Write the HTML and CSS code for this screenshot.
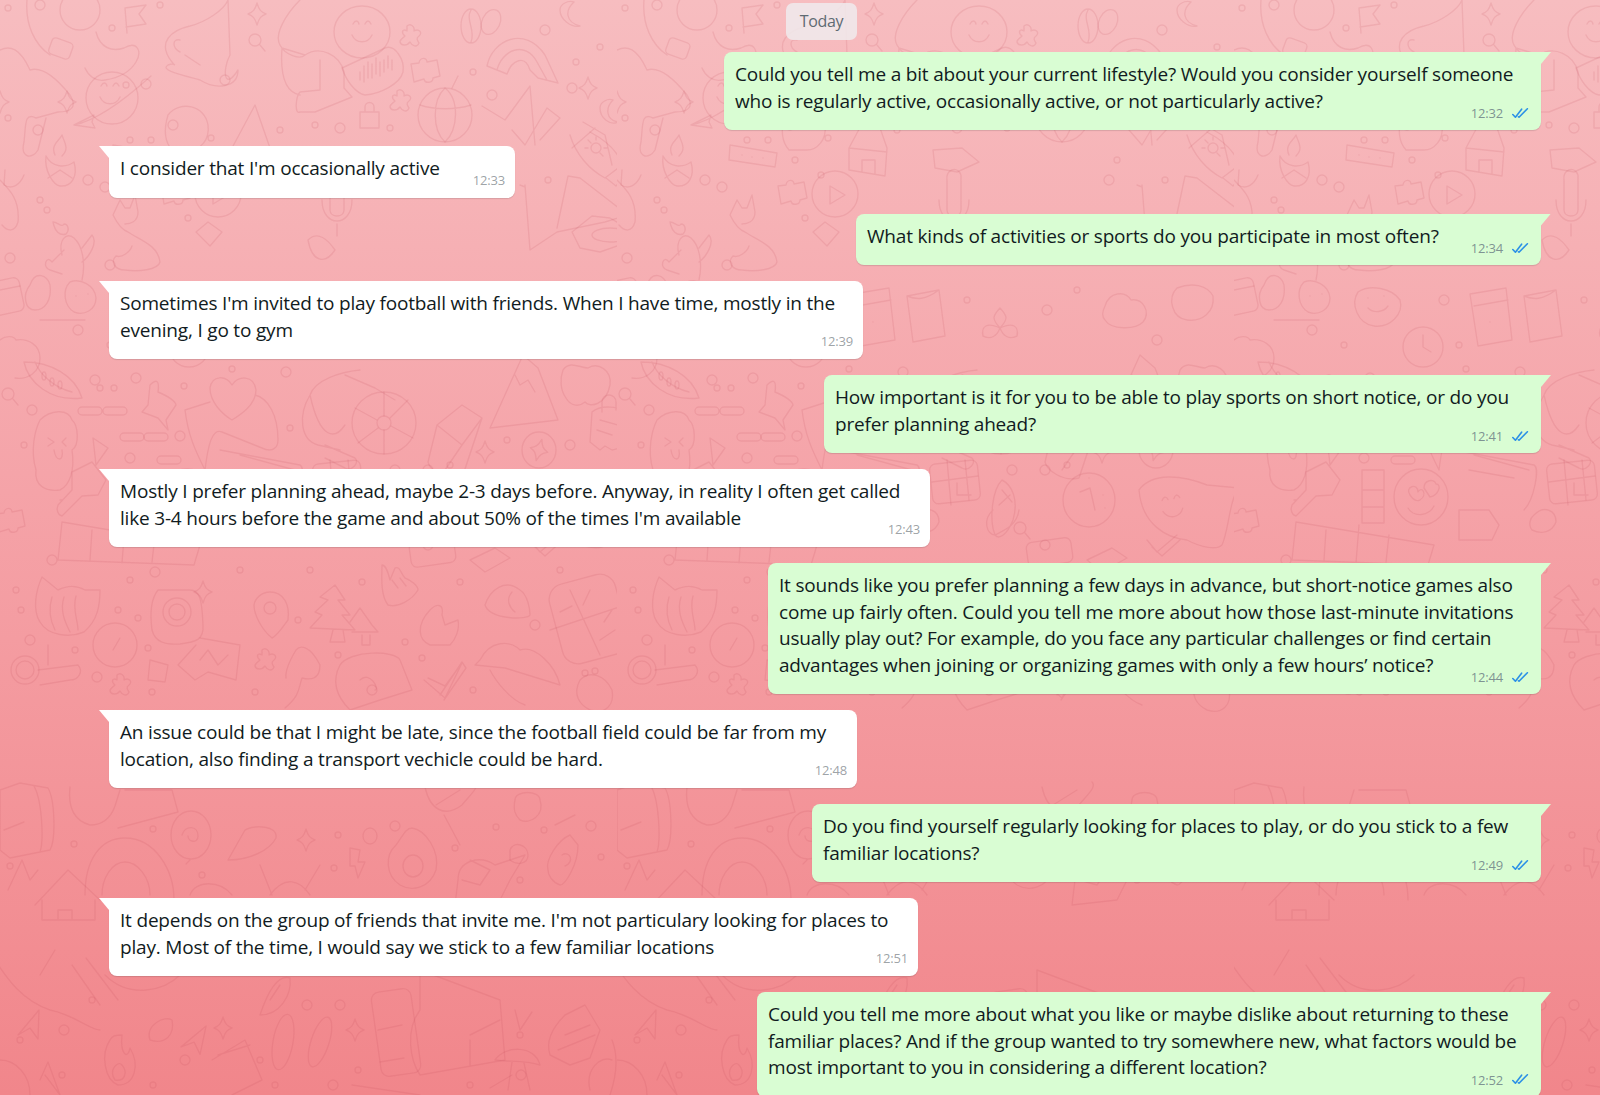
FILE: index.html
```html
<!DOCTYPE html>
<html lang="en">
<head>
<meta charset="utf-8">
<title>Chat</title>
<link rel="stylesheet" href="styles.css">
</head>
<body>
<svg class="doodles" width="1600" height="1095" aria-hidden="true">
  <defs>
    <circle id="o" r="5"/>
    <circle id="p" r="3"/>
    <path id="star" d="M0 -11C2 -4 4 -2 9 0C4 2 2 4 0 11C-2 4 -4 2 -9 0C-4 -2 -2 -4 0 -11Z"/>
    <path id="cross" d="M-3 -10C0 -13 5 -10 4 -5C9 -8 13 -3 9 0C6 2 7 4 9 7C7 12 2 10 0 6C-3 10 -9 10 -10 6C-10 3 -7 2 -5 0C-9 -3 -8 -8 -3 -5Z"/>
    <path id="pill" d="M-8 -4H8A4 4 0 0 1 8 4H-8A4 4 0 0 1 -8 -4Z"/>
    <path id="nav" d="M-11 12L10 -13L9 16L1 5Z"/>
    <path id="smile" d="M-10 5C-6 14 6 14 10 5M-9 -6C-7 -10 -4 -10 -3 -6M3 -6C5 -10 7 -10 9 -6"/>
    <path id="puzzle" d="M-14 -6L-6 -7C-5 -13 2 -13 2 -8L12 -10L15 6L8 8C8 13 0 14 -1 9L-11 12Z"/>
    <g id="mag"><circle cx="-2" cy="-2" r="6"/><path d="M3 3L8 9"/></g>
    <pattern id="tile" width="617" height="1095" patternUnits="userSpaceOnUse">
      <g class="ink">
        <!-- band 0-145 -->
        <circle cx="80" cy="10" r="20"/>
        <path d="M27 0C25 25 35 45 50 55M96 32C100 48 112 52 124 48C138 40 142 52 136 62C130 72 118 78 105 80C95 82 88 75 85 68M0 50C10 45 20 48 30 70M30 70C45 65 62 85 70 95C78 108 70 112 58 112L36 118C24 112 26 125 24 142C20 158 32 160 38 150L46 118"/>
        <rect x="50" y="40" width="22" height="17" rx="4" transform="rotate(20 61 48)"/>
        <path d="M127 33L125 8L146 5L139 14L146 24L126 27"/>
        <circle cx="112" cy="98" r="26"/><path d="M74 125C100 120 130 95 151 76M74 125L94 115L92 122L95 128Z"/>
        <use href="#smile" x="110" y="92"/>
        <use href="#star" x="67" y="102"/>
        <path d="M172 62C156 42 172 30 190 26C206 22 224 10 228 0L230 55C222 70 224 92 238 70C238 88 216 90 200 80C178 74 160 70 168 65C176 62 176 68 172 62ZM180 40C172 38 172 48 180 52M185 55L200 65"/>
        <use href="#star" x="257" y="14"/>
        <use href="#mag" x="257" y="42"/>
        <path d="M300 0C285 15 274 35 280 45C285 55 300 60 305 55L282 48C280 75 285 92 300 95M305 55C320 45 340 55 344 72L344 88L352 97L315 112L300 112C294 115 296 96 300 92L320 90V60"/>
        <ellipse cx="362" cy="32" rx="28" ry="26"/>
        <use href="#smile" x="362" y="30"/>
        <path d="M342 68L385 48C395 44 405 60 403 72C400 84 380 94 365 95C355 93 346 80 342 68ZM360 80V72M364 82V66M368 78V62M372 78V64M376 74V58M380 76V62M384 72V60M388 68V56M392 70V60"/>
        <use href="#cross" x="410" y="36"/>
        <use href="#puzzle" x="425" y="70"/>
        <use href="#cross" x="400" y="101"/>
        <path d="M360 112h19v16h-19zM365 112v-5a4 4 0 0 1 9 0v5"/>
        <circle cx="445" cy="115" r="27"/><path d="M445 88C432 100 432 130 445 142C458 130 460 100 445 88M420 105C435 110 455 110 471 105M452 88L458 76"/>
        <ellipse cx="471" cy="26" rx="10" ry="17"/><ellipse cx="491" cy="22" rx="9" ry="13" transform="rotate(25 491 22)"/><path d="M471 10C465 20 476 30 471 42"/>
        <path d="M487 66C492 40 525 25 545 55L558 83M497 70C502 50 525 40 537 62L547 80M507 74C512 60 525 54 530 70L538 78M487 66L507 74M538 78L558 83"/>
        <path d="M232 148L255 105L270 148L268 176L232 170ZM232 148L270 152M245 172V160H258V174"/>
        <path d="M574 2C565 10 565 22 580 26C572 28 560 20 560 10C560 4 568 0 574 2ZM613 100C605 108 606 120 618 122C610 126 600 118 600 108C600 102 608 98 613 100Z"/>
        <use href="#star" x="588" y="88"/>
        <use href="#star" x="0" y="102"/>
        <path d="M168 115C180 100 205 105 208 125C210 140 200 150 190 150H172C163 140 165 125 168 115Z"/>
        <path d="M482 106L505 120L530 86L535 145M512 130L525 145L547 108L560 118L540 140"/>
        <path d="M583 122L605 135L612 165M572 148L595 128"/>
        <!-- band 135-280 -->
        <path d="M570 135C576 155 590 170 605 178L622 165C618 150 605 140 590 132M606 178L616 186L630 170L620 162"/>
        <circle cx="596" cy="148" r="5"/><path d="M596 137v3M585 148h3M604 148h3M588 140l3 3M603 156l-3 -3"/>
        <path d="M46 156C44 172 54 185 60 186C72 187 78 176 74 162C66 168 52 168 46 156ZM55 155C50 145 60 140 62 135C64 142 70 148 62 156M48 178L60 170L72 178"/>
        <path d="M5 170L4 185C12 190 20 185 24 175"/>
        <path d="M572 232L592 216L610 218L627 228L620 245L600 252L580 248Z"/>
        <path d="M525 185L530 250L557 232L605 222L628 215L580 178L568 176L557 228M520 185L525 187"/>
        <ellipse cx="610" cy="235" rx="18" ry="7"/>
        <path d="M113 148L160 156L158 170L112 163ZM125 158v.1M135 160v.1M146 161v.1" transform="translate(0 -3)"/>
        <path d="M120 200L113 215C118 225 122 230 128 232C140 240 158 245 160 262C158 270 138 272 125 270C115 270 110 262 116 256C122 258 130 252 132 246M120 200L125 208L130 208L135 195L138 212C138 222 130 224 125 224"/>
        <path d="M62 255C58 240 66 232 74 238C82 245 86 262 82 280M64 250L52 262C46 254 42 268 50 270L62 274M82 248L92 235C98 242 90 256 82 262M53 222C58 222 62 228 64 224C68 224 70 230 66 234C60 236 55 232 53 222Z"/>
        <use href="#puzzle" x="175" y="192"/>
        <circle cx="218" cy="194" r="23"/><path d="M213 186L213 204L228 195Z"/>
        <path d="M196 232L208 222L222 232L210 246Z"/>
        <path d="M0 180C10 190 20 200 18 222C15 232 8 232 2 225"/>
        <!-- band 280-370 -->
        <path d="M30 285C35 270 48 275 50 285C52 300 45 310 35 310C25 310 22 295 30 285Z"/>
        <path d="M16 340C28 338 40 345 40 358C40 372 28 380 15 378M0 340C6 335 14 336 16 340"/>
        <path d="M40 320L85 320"/>
        <rect x="-14" y="280" width="36" height="34" rx="6" transform="rotate(-12 4 297)"/><path d="M-10 292L20 286"/>
        <path d="M70 282C80 278 95 285 96 298C96 310 84 316 74 312C64 306 62 290 70 282ZM76 296v.1M88 294v.1"/>
        <path d="M124 292C136 284 158 288 166 300C170 314 156 328 140 326C124 324 116 304 124 292ZM134 308C140 314 150 312 154 306M134 298v.1M150 296v.1"/>
        <circle cx="189" cy="347" r="20"/><path d="M189 335V347L197 352"/>
        <path d="M236 294L272 288L278 340L244 346ZM240 306L274 300M256 322v.1"/>
        <path d="M290 296L322 290L328 336L296 342ZM290 296C300 300 308 300 322 290M296 342L290 296"/>
        <path d="M383 308C390 316 392 318 383 328C374 318 376 316 383 308ZM383 328C396 322 402 326 400 336C392 340 386 336 383 328ZM383 328C370 322 364 326 366 336C374 340 380 336 383 328Z"/>
        <path d="M488 306C492 292 508 290 514 300C526 298 534 312 526 322C518 330 494 330 488 320C484 316 486 310 488 306Z"/>
        <path d="M560 288C575 282 590 285 596 296C598 312 585 322 570 320C555 318 550 298 560 288Z"/>
        <!-- right margin tile x 307-366 -->
        <path d="M330 180C328 170 340 165 344 175V210C344 218 330 218 330 210ZM322 200C322 228 352 228 352 200M337 224V236"/>
        <path d="M308 240C318 230 328 240 335 250C325 265 312 262 308 240Z"/>
        <path d="M316 150L345 148L362 162L340 172L318 168Z"/>
        <!-- band 355-470 -->
        <path d="M24 362C28 382 50 402 82 398C75 375 50 362 24 362ZM35 362C40 375 55 388 72 392"/>
        <ellipse cx="44" cy="376" rx="2" ry="4"/><ellipse cx="52" cy="382" rx="2" ry="4"/><ellipse cx="60" cy="385" rx="2" ry="4"/>
        <use href="#mag" x="10" y="396"/>
        <path d="M210 388C212 375 226 375 232 385C238 375 254 375 256 390C256 405 240 415 232 420C222 414 210 402 210 388ZM255 395C268 398 278 415 278 440C278 450 270 452 262 448L222 432C212 428 208 445 205 470M185 410L210 402M185 410C188 435 195 450 205 470"/>
        <path d="M150 385C155 380 160 378 158 392C165 395 175 400 176 405L166 420L168 430L158 418L142 412L148 405Z"/>
        <ellipse cx="384" cy="423" rx="32" ry="31"/><circle cx="384" cy="423" r="7"/><path d="M384 416V392M384 430V454M377 420L355 408M391 426L413 438M378 428L358 443M390 418L408 400"/>
        <path d="M360 370C340 372 315 380 310 395C298 415 300 440 318 445L340 450M345 375L375 388L395 400M310 395C320 440 335 440 345 425M325 445L355 458C360 462 352 472 345 468L325 458"/>
        <path d="M437 425L462 405L482 418L462 478C445 482 430 470 428 462ZM437 425L462 445L445 470M462 445L482 418"/>
        <path d="M490 428L523 355L538 368L558 420ZM515 375L520 385L528 380L535 392"/>
        <path d="M563 370C570 360 580 368 588 368C598 362 612 370 610 385C606 405 590 408 585 402C578 408 570 405 566 398C560 390 560 378 563 370Z"/>
        <path d="M592 412C600 405 622 405 625 415L630 440C628 448 618 448 612 450L605 446L600 450L590 442ZM600 420L618 425M597 430L612 435M602 412V402A7 7 0 0 1 616 402V410"/>
        <ellipse cx="539" cy="450" rx="17" ry="18"/><use href="#star" x="539" y="450" transform="rotate(15 539 450)"/>
        <use href="#star" x="485" y="452"/>
        <path d="M40 420C50 410 68 408 72 420C78 425 80 445 72 450C75 470 70 485 60 490C45 492 34 485 36 470C30 450 35 430 40 420ZM48 438L54 442L48 446M66 438L62 442L66 446M54 450C56 462 64 462 62 450"/>
        <path d="M93 438L108 448L96 465Z"/>
        <use href="#pill" x="90" y="411"/><use href="#pill" x="115" y="411"/>
        <use href="#pill" x="132" y="437"/><use href="#pill" x="156" y="437"/>
        <use href="#pill" x="169" y="460"/>
        <path d="M220 450L300 465C306 468 300 500 290 510M240 455L295 470M235 470L280 478"/>
        <!-- band 450-565 -->
        <rect x="314" y="462" width="48" height="40" rx="6" transform="rotate(-6 338 482)"/>
        <path d="M315 482L361 476M330 460L334 505M348 460L352 500M340 483V495H354"/>
        <path d="M385 480C395 485 402 500 396 520C390 535 382 540 378 535C372 520 375 490 385 480ZM376 510C365 520 370 535 378 535C388 530 400 525 402 510M385 490L395 502M382 505L393 495"/>
        <ellipse cx="472" cy="500" rx="26" ry="27"/><path d="M463 492L473 488L478 510M472 478v.1M486 495v.1M488 508v.1"/>
        <path d="M522 490C535 472 565 475 590 485L622 488C612 500 612 530 605 545C600 550 585 548 570 540C550 538 525 525 522 490Z"/>
        <use href="#smile" x="555" y="505" transform="rotate(-10 555 505)"/>
        <path d="M60 500L62 500M72 472L92 462L106 480L98 495L82 496L62 516C58 515 56 510 58 505L72 490Z"/>
        <path d="M128 470H150V523H128ZM128 490H150M128 507H150"/>
        <path d="M62 522L200 545L194 565L58 560ZM92 530L90 560M125 525L122 563M155 535L152 562"/>
        <ellipse cx="187" cy="497" rx="27" ry="28"/>
        <path d="M176 495C170 487 184 482 184 492C188 485 194 495 186 500C182 502 178 498 176 495ZM190 488C190 480 200 478 202 484C208 484 205 495 196 497ZM174 508C180 518 195 516 200 506"/>
        <use href="#mag" x="405" y="530" />
        <path d="M530 540L540 552L560 535M535 547L545 556L563 540"/>
        <use href="#puzzle" x="10" y="520"/>
        <path d="M225 510H255L265 525L258 540H225Z"/>
        <path d="M300 515C310 505 322 510 322 522C318 532 308 535 298 530C294 525 296 518 300 515Z"/>
        <rect x="410" y="540" width="45" height="25" rx="6" transform="rotate(-8 432 552)"/>
        <path d="M470 560L495 548L510 558L485 572Z"/>
        <!-- band 560-710 -->
        <path d="M42 577L58 590C68 585 78 586 85 590L100 590C100 605 98 620 84 632C70 638 48 636 40 622C32 610 36 590 42 577ZM52 597C48 610 50 620 55 630M64 597C60 610 64 620 70 632M76 596C72 610 78 620 78 630"/>
        <path d="M158 590H190C200 590 202 600 203 625C204 640 196 642 180 644C165 645 155 642 152 630C150 615 150 600 158 590Z"/>
        <circle cx="177" cy="612" r="14"/><circle cx="177" cy="612" r="8"/>
        <use href="#star" x="203" y="592"/>
        <path d="M270 592C284 592 290 605 288 620C284 625 278 635 272 638C262 630 254 615 254 605C255 598 262 592 270 592Z"/><circle cx="270" cy="608" r="6"/>
        <path d="M335 585L345 600L338 600L350 615L342 615L355 630L310 628L322 615L315 612L328 600L320 597ZM333 630L330 642H345L343 630M350 622L360 608L372 625L378 632L352 632M362 635V645H370V635"/>
        <path d="M382 565C382 575 380 595 388 605C398 608 412 600 418 590C418 585 410 580 405 578C400 572 400 566 395 568L390 580C388 572 386 565 382 565ZM392 580L398 588M400 578L406 586"/>
        <path d="M430 610C438 602 444 605 442 615L445 625L458 620C460 630 455 640 450 645L430 645C418 640 416 625 430 610Z"/>
        <path d="M485 605C490 590 505 578 520 590C528 595 530 610 530 615C528 620 490 620 485 605Z"/>
        <path d="M512 592C505 600 510 608 515 612"/>
        <rect x="555" y="578" width="68" height="82" rx="16" transform="rotate(-15 589 619)"/>
        <path d="M570 590L600 655M550 630L625 605M583 605L590 590M560 612L572 606M600 640L615 630M612 610L604 622"/>
        <circle cx="115" cy="645" r="22"/><path d="M113 650L120 638"/>
        <path d="M200 638L240 645L236 680L208 672L195 680L178 665L196 645M200 660L208 650L218 665L228 655"/>
        <use href="#cross" x="265" y="660"/>
        <path d="M296 650C300 645 310 645 320 665C320 680 310 680 302 678C298 690 300 695 285 708M296 650C290 660 285 670 286 678"/>
        <path d="M340 665C350 650 395 650 400 660L412 690L380 700L350 710C335 695 332 680 340 665ZM360 680C370 670 380 690 375 690"/>
        <path d="M424 680L445 698L462 663L445 686L428 678M440 695L462 662L466 668L444 700"/>
        <path d="M480 660C490 640 510 640 520 650C535 645 555 665 560 685L505 668L475 665ZM490 670C495 680 510 700 525 705"/>
        <path d="M580 680C590 670 605 675 612 690C615 705 605 715 590 710C580 705 572 695 580 680Z"/><circle cx="585" cy="673" r="3"/><circle cx="595" cy="671" r="3"/>
        <circle cx="25" cy="670" r="14"/><circle cx="25" cy="670" r="9"/><path d="M38 670L78 665C84 672 78 680 70 680L40 685M48 645V665"/>
        <use href="#cross" x="120" y="685"/>
        <path d="M150 660L168 665L165 682L148 680Z"/>
        <!-- band 700-900 left side -->
        <path d="M0 790L20 783L48 788C55 800 56 840 50 850L10 858L0 850ZM34 786C42 800 44 840 40 852M4 830L24 822"/>
        <path d="M70 787C68 805 72 820 90 825C100 825 110 820 115 806L120 790"/>
        <path d="M125 790L172 790L178 812L118 828"/>
        <ellipse cx="191" cy="835" rx="20" ry="24"/><path d="M182 835C185 825 198 825 198 836C198 844 188 842 188 836M190 860L186 864"/>
        <path d="M228 860L245 830C255 825 278 825 276 838C270 850 250 860 228 860Z"/>
        <use href="#star" x="306" y="840"/>
        <ellipse cx="370" cy="836" rx="7" ry="8"/>
        <path d="M412 828C425 830 440 850 436 870C430 888 412 892 400 885C385 875 385 855 396 845C402 838 405 828 412 828Z"/><ellipse cx="413" cy="866" rx="10" ry="11"/>
        <path d="M350 848L360 850L358 862L365 862L358 878L355 866L350 866Z"/>
        <path d="M425 787C430 810 445 818 462 805C470 795 480 787 475 782M436 805L460 790M444 815L460 845"/>
        <path d="M515 800C515 790 540 790 540 800C545 815 530 825 520 820C515 815 513 810 515 800Z"/>
        <path d="M555 825L575 815M548 870C545 860 558 840 570 835L578 845C578 865 565 885 560 885C552 882 548 875 548 870ZM562 855C570 850 575 862 565 866"/>
        <path d="M458 880C458 860 480 855 495 865L525 855L510 880L500 900L455 905ZM470 860L490 870L480 885L462 880"/>
        <path d="M510 850C514 840 528 845 528 855C528 865 516 865 510 860Z"/>
        <path d="M85 895C85 860 100 838 125 838C155 838 174 870 174 900M102 895C102 878 112 862 125 862C138 862 150 878 150 895"/>
        <path d="M35 905L68 870L100 900M42 900V920H95V900M58 920V910H72V920M8 890L22 860L30 880L38 870"/>
        <path d="M260 865L272 895M320 865L305 890M270 895C285 875 300 880 310 895"/>
        <path d="M190 895C195 880 220 880 232 895"/>
        <!-- band 900-1095 -->
        <path d="M-5 960C5 975 20 1000 50 1010C75 1015 90 1030 100 1030"/>
        <path d="M40 975L55 950M72 965L100 1005M86 958L118 1000M105 975C130 1000 165 990 180 975"/>
        <use href="#nav" x="29" y="1023"/>
        <path d="M110 1040C100 1055 105 1080 118 1085C135 1085 140 1065 130 1048C128 1060 120 1055 122 1035C115 1035 112 1036 110 1040ZM115 1080C108 1070 118 1060 122 1065C128 1072 125 1082 115 1080Z"/>
        <path d="M260 1015C270 985 280 975 290 978C292 995 280 1015 260 1015ZM270 1000L280 985"/>
        <use href="#nav" x="194" y="1037" transform="rotate(10 194 1037)"/>
        <path d="M150 1040C145 1025 165 1015 172 1020C175 1035 165 1045 150 1040Z"/>
        <use href="#star" x="223" y="1028"/>
        <ellipse cx="283" cy="1042" rx="10" ry="28" transform="rotate(10 283 1042)"/><ellipse cx="320" cy="1042" rx="9" ry="26" transform="rotate(18 320 1042)"/>
        <path d="M212 1060L245 1040L262 1080L232 1095M218 1055L250 1045"/>
        <use href="#star" x="355" y="1030"/>
        <rect x="376" y="990" width="40" height="85" rx="8" transform="rotate(-8 396 1032)"/>
        <path d="M378 1030L402 1025M380 1062L404 1058"/>
        <path d="M420 970L500 1000L505 1060L420 1075C410 1060 405 1030 420 1010ZM470 1040V1065M470 1035L500 1020"/>
        <path d="M352 1085L420 1095M490 1088L512 1075"/>
        <path d="M495 1060C505 1045 535 1045 540 1065C525 1060 510 1062 495 1060ZM512 1062L508 1090M524 1063L530 1090"/>
        <path d="M515 1010L520 1030L532 1012"/>
        <path d="M565 1015L585 1005L600 1030L590 1058L570 1065L550 1055C545 1040 555 1025 565 1015ZM565 1035L590 1025M558 1050L595 1035"/>
        <path d="M0 1060C16 1060 30 1075 30 1095M45 1075L60 1095M60 1095L48 1062L40 1080"/>
        <path d="M612 1040C620 1060 615 1080 610 1095M590 1090C585 1070 600 1055 612 1060"/>
        <g class="dots">
          <use href="#o" x="40" y="5"/><use href="#p" x="8" y="8"/><use href="#p" x="112" y="28"/><use href="#p" x="160" y="5"/><use href="#p" x="126" y="85"/><use href="#o" x="146" y="84"/><use href="#p" x="151" y="140"/><use href="#o" x="173" y="125"/><use href="#p" x="211" y="138"/><use href="#o" x="225" y="80"/><use href="#p" x="280" y="130"/><use href="#o" x="340" y="128"/><use href="#p" x="315" y="125"/><use href="#p" x="390" y="128"/><use href="#p" x="473" y="72"/><use href="#o" x="492" y="95"/><use href="#o" x="545" y="30"/><use href="#p" x="576" y="62"/><use href="#o" x="572" y="88"/><use href="#p" x="600" y="47"/><use href="#p" x="8" y="118"/><use href="#o" x="38" y="130"/><use href="#p" x="40" y="200"/><use href="#o" x="88" y="180"/>
          <use href="#o" x="105" y="187"/><use href="#p" x="130" y="140"/><use href="#p" x="178" y="160"/><use href="#p" x="204" y="175"/><use href="#p" x="188" y="218"/><use href="#o" x="10" y="258"/><use href="#p" x="47" y="210"/><use href="#o" x="110" y="265"/><use href="#o" x="78" y="330"/><use href="#p" x="500" y="160"/><use href="#o" x="492" y="180"/><use href="#p" x="548" y="180"/><use href="#o" x="210" y="300"/><use href="#p" x="460" y="290"/><use href="#o" x="430" y="310"/><use href="#p" x="350" y="300"/><use href="#o" x="540" y="340"/><use href="#p" x="225" y="345"/><use href="#p" x="110" y="345"/>
          <use href="#o" x="95" y="380"/><use href="#o" x="136" y="378"/><use href="#p" x="100" y="388"/><use href="#p" x="114" y="388"/><use href="#p" x="184" y="386"/><use href="#o" x="286" y="372"/><use href="#p" x="232" y="369"/><use href="#o" x="32" y="410"/><use href="#p" x="24" y="445"/><use href="#o" x="180" y="436"/><use href="#o" x="130" y="458"/><use href="#p" x="290" y="428"/><use href="#p" x="507" y="440"/><use href="#o" x="570" y="445"/><use href="#o" x="640" y="400"/>
          <use href="#o" x="395" y="470"/><use href="#o" x="428" y="470"/><use href="#p" x="450" y="465"/><use href="#o" x="52" y="560"/><use href="#p" x="310" y="570"/><use href="#p" x="240" y="570"/><use href="#o" x="155" y="572"/><use href="#p" x="130" y="580"/><use href="#o" x="428" y="545"/><use href="#p" x="16" y="590"/><use href="#p" x="21" y="610"/><use href="#p" x="118" y="610"/><use href="#p" x="138" y="618"/><use href="#o" x="30" y="640"/><use href="#p" x="75" y="650"/><use href="#p" x="148" y="648"/><use href="#p" x="362" y="582"/><use href="#p" x="405" y="642"/><use href="#p" x="298" y="620"/><use href="#p" x="560" y="570"/><use href="#p" x="460" y="582"/><use href="#o" x="535" y="625"/>
          <use href="#o" x="97" y="677"/><use href="#p" x="152" y="692"/><use href="#p" x="338" y="655"/><use href="#p" x="422" y="658"/><use href="#o" x="372" y="690"/><use href="#p" x="473" y="690"/><use href="#p" x="255" y="692"/>
          <use href="#p" x="153" y="829"/><use href="#p" x="74" y="844"/><use href="#p" x="338" y="835"/><use href="#p" x="496" y="827"/><use href="#p" x="544" y="830"/><use href="#o" x="591" y="826"/><use href="#p" x="601" y="857"/><use href="#o" x="395" y="826"/><use href="#p" x="455" y="848"/><use href="#p" x="10" y="866"/><use href="#p" x="334" y="868"/><use href="#p" x="202" y="875"/><use href="#p" x="520" y="880"/>
          <use href="#o" x="307" y="1005"/><use href="#o" x="340" y="1005"/><use href="#p" x="92" y="1000"/><use href="#p" x="20" y="1040"/><use href="#o" x="64" y="1030"/><use href="#p" x="62" y="1075"/><use href="#o" x="185" y="1060"/><use href="#p" x="153" y="1085"/><use href="#p" x="260" y="1060"/><use href="#p" x="275" y="1085"/><use href="#o" x="333" y="1085"/><use href="#p" x="520" y="1035"/><use href="#o" x="521" y="1075"/><use href="#p" x="470" y="1085"/><use href="#p" x="358" y="1070"/>
        </g>
      </g>
    </pattern>
  </defs>
  <rect width="1600" height="1095" fill="url(#tile)"/>
</svg>

<svg class="svg-defs" width="0" height="0" aria-hidden="true">
  <symbol id="ticks" viewBox="0 0 17 11">
    <path d="M.8 6.5L3.4 9.2L9.6 1.2M6.4 8.8L7 9.2L15.4 .8"/>
  </symbol>
</svg>

<main class="chat">
  <div class="day">Today</div>

  <article class="msg out w1">
    <p>Could you tell me a bit about your current lifestyle? Would you consider yourself someone<br>who is regularly active, occasionally active, or not particularly active?</p>
    <div class="meta"><time>12:32</time><svg class="tick"><use href="#ticks"/></svg></div>
  </article>

  <article class="msg in w2">
    <p>I consider that I'm occasionally active</p>
    <div class="meta"><time>12:33</time></div>
  </article>

  <article class="msg out w3">
    <p>What kinds of activities or sports do you participate in most often?</p>
    <div class="meta"><time>12:34</time><svg class="tick"><use href="#ticks"/></svg></div>
  </article>

  <article class="msg in w4">
    <p>Sometimes I'm invited to play football with friends. When I have time, mostly in the<br>evening, I go to gym</p>
    <div class="meta"><time>12:39</time></div>
  </article>

  <article class="msg out w5">
    <p>How important is it for you to be able to play sports on short notice, or do you<br>prefer planning ahead?</p>
    <div class="meta"><time>12:41</time><svg class="tick"><use href="#ticks"/></svg></div>
  </article>

  <article class="msg in w6">
    <p>Mostly I prefer planning ahead, maybe 2-3 days before. Anyway, in reality I often get called<br>like 3-4 hours before the game and about 50% of the times I'm available</p>
    <div class="meta"><time>12:43</time></div>
  </article>

  <article class="msg out w7">
    <p>It sounds like you prefer planning a few days in advance, but short-notice games also<br>come up fairly often. Could you tell me more about how those last-minute invitations<br>usually play out? For example, do you face any particular challenges or find certain<br>advantages when joining or organizing games with only a few hours’ notice?</p>
    <div class="meta"><time>12:44</time><svg class="tick"><use href="#ticks"/></svg></div>
  </article>

  <article class="msg in w8">
    <p>An issue could be that I might be late, since the football field could be far from my<br>location, also finding a transport vechicle could be hard.</p>
    <div class="meta"><time>12:48</time></div>
  </article>

  <article class="msg out w9">
    <p>Do you find yourself regularly looking for places to play, or do you stick to a few<br>familiar locations?</p>
    <div class="meta"><time>12:49</time><svg class="tick"><use href="#ticks"/></svg></div>
  </article>

  <article class="msg in w10">
    <p>It depends on the group of friends that invite me. I'm not particulary looking for places to<br>play. Most of the time, I would say we stick to a few familiar locations</p>
    <div class="meta"><time>12:51</time></div>
  </article>

  <article class="msg out w11">
    <p>Could you tell me more about what you like or maybe dislike about returning to these<br>familiar places? And if the group wanted to try somewhere new, what factors would be<br>most important to you in considering a different location?</p>
    <div class="meta"><time>12:52</time><svg class="tick"><use href="#ticks"/></svg></div>
  </article>
</main>
</body>
</html>
```

FILE: styles.css
```css
* { box-sizing: border-box; }

html, body {
  margin: 0;
  height: 1095px;
  overflow: hidden;
}

body {
  position: relative;
  background: linear-gradient(180deg, #f7bdc0 0%, #f5a3a8 45%, #f1868b 100%);
  font-family: "Open Sans", "Noto Sans", sans-serif;
  color: #111b21;
}

.doodles {
  position: absolute;
  inset: 0;
  display: block;
}

.svg-defs { position: absolute; }

.ink {
  fill: none;
  stroke: rgba(186, 62, 74, 0.13);
  stroke-width: 1.4;
  stroke-linecap: round;
  stroke-linejoin: round;
}

.chat {
  position: relative;
  display: flex;
  flex-direction: column;
  gap: 16px;
  height: 1095px;
  padding: 3px 59px 0 109px;
}

.day {
  align-self: center;
  width: 71px;
  height: 37px;
  margin: 0 7px -4px 0;
  border-radius: 7px;
  background: rgba(240, 235, 237, 0.85);
  color: #5f6b73;
  font-size: 16px;
  line-height: 37px;
  text-align: center;
  letter-spacing: -0.3px;
}

.msg {
  position: relative;
  flex: none;
  height: auto;
  padding: 9px 11px 16px;
  border-radius: 8px;
  box-shadow: 0 1px 1px rgba(11, 20, 26, 0.13);
}

.msg p {
  margin: 0;
  font-size: 19px;
  line-height: 26.5px;
  letter-spacing: -0.19px;
  white-space: nowrap;
}

.msg::after {
  content: "";
  position: absolute;
  top: 0;
  width: 10px;
  height: 12px;
}

.out {
  align-self: flex-end;
  background: #d9fdd3;
  border-top-right-radius: 0;
}

.out::after {
  left: 100%;
  background: #d9fdd3;
  clip-path: polygon(0 0, 100% 0, 0 100%);
}

.in {
  align-self: flex-start;
  background: #fff;
  border-top-left-radius: 0;
}

.in::after {
  right: 100%;
  background: #fff;
  clip-path: polygon(0 0, 100% 0, 100% 100%);
}

.meta {
  position: absolute;
  right: 12px;
  bottom: 7px;
  display: flex;
  align-items: center;
  gap: 9px;
  height: 20px;
}

.in .meta {
  right: 10px;
  bottom: 8px;
}

.meta time {
  font-size: 13px;
  letter-spacing: -0.2px;
  color: rgba(102, 119, 129, 0.8);
}

.in .meta time { color: rgba(102, 110, 116, 0.65); }

.tick {
  width: 17px;
  height: 11px;
  fill: none;
  stroke: #2b90e6;
  stroke-width: 1.6;
  stroke-linecap: round;
  stroke-linejoin: round;
}

.w1 { width: 817px; }
.w2 { width: 406px; }
.w3 { width: 685px; }
.w4 { width: 754px; }
.w5 { width: 717px; }
.w6 { width: 821px; }
.w7 { width: 773px; }
.w8 { width: 748px; }
.w9 { width: 729px; }
.w10 { width: 809px; }
.w11 { width: 784px; }
```
